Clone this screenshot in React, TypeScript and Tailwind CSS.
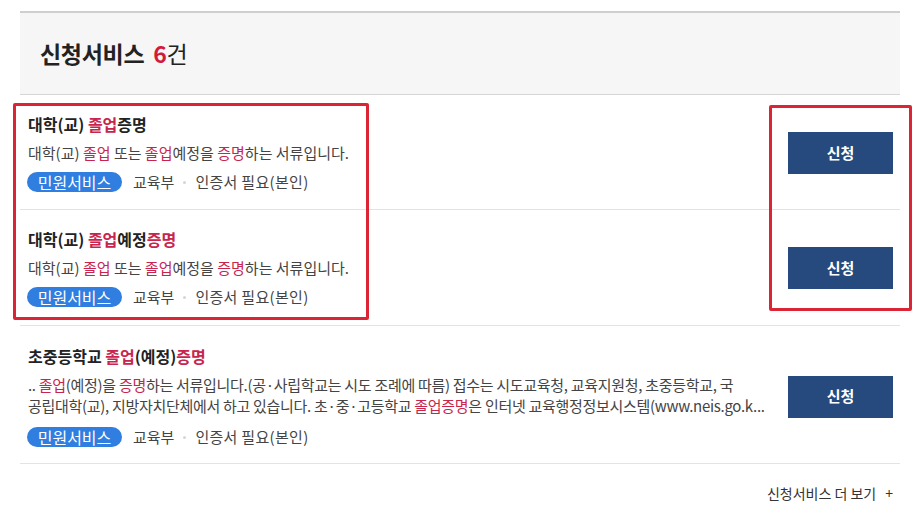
import type { ReactNode } from 'react';

const R = ({ children }: { children: ReactNode }) => (
  <span className="text-[#c8254e]">{children}</span>
);

function Tags() {
  return (
    <div className="flex items-center h-[22px] text-[15px] text-[#444]">
      <span className="h-[20px] w-[95px] rounded-full bg-[#2f7ee0] text-white text-[16px] leading-[20px] flex items-center justify-center -ml-[1px]">
        민원서비스
      </span>
      <span className="ml-[11px]">교육부</span>
      <span className="mx-[9px] w-[3px] h-[3px] rounded-full bg-[#d6d6d6]" />
      <span className="tracking-[0.3px]">인증서 필요(본인)</span>
    </div>
  );
}

function ApplyButton() {
  return (
    <button className="w-[105px] h-[42px] bg-[#264a7e] text-white text-[15px] font-bold shrink-0">
      신청
    </button>
  );
}

type Row = {
  title: ReactNode;
  desc: ReactNode[];
  pt: string;
  pb: string;
  tagGap: string;
};

const rows: Row[] = [
  {
    title: (
      <>
        대학(교) <R>졸업</R>증명
      </>
    ),
    desc: [
      <>
        대학(교) <R>졸업</R> 또는 <R>졸업</R>예정을 <R>증명</R>하는 서류입니다.
      </>,
    ],
    pt: 'pt-[18px]',
    pb: 'pb-[16px]',
    tagGap: 'mt-[7px]',
  },
  {
    title: (
      <>
        대학(교) <R>졸업</R>예정<R>증명</R>
      </>
    ),
    desc: [
      <>
        대학(교) <R>졸업</R> 또는 <R>졸업</R>예정을 <R>증명</R>하는 서류입니다.
      </>,
    ],
    pt: 'pt-[18px]',
    pb: 'pb-[17px]',
    tagGap: 'mt-[7px]',
  },
  {
    title: (
      <>
        초중등학교 <R>졸업</R>(예정)<R>증명</R>
      </>
    ),
    desc: [
      <>
        .. <R>졸업</R>(예정)을 <R>증명</R>하는 서류입니다.(공·사립학교는 시도 조례에 따름) 접수는 시도교육청, 교육지원청, 초중등학교, 국
      </>,
      <>
        공립대학(교), 지방자치단체에서 하고 있습니다. 초·중·고등학교 <R>졸업증명</R>은 인터넷 교육행정정보시스템(www.neis.go.k...
      </>,
    ],
    pt: 'pt-[19px]',
    pb: 'pb-[15px]',
    tagGap: 'mt-[10px]',
  },
];

export default function App() {
  return (
    <div
      className="relative w-[916px] h-[518px] bg-white text-[#222] overflow-hidden"
      style={{ fontFamily: '"Noto Sans CJK KR", "Noto Sans", sans-serif' }}
    >
      <div className="ml-[20px] w-[880px] pt-[11px]">
        {/* Header */}
        <div className="h-[84px] border-t-2 border-[#cfcfcf] border-b border-b-[#d6d6d6] bg-[#f6f6f6] flex items-center pl-[20px]">
          <h2 className="text-[23px] font-bold text-[#222] tracking-[-0.3px]">
            신청서비스 <span className="text-[#d3193c] ml-[4px]">6</span>
            <span className="font-normal">건</span>
          </h2>
        </div>

        {/* List */}
        {rows.map((row, i) => (
          <div
            key={i}
            className={`flex items-center justify-between border-b border-[#e3e3e3] pl-[8px] pr-[7px] ${row.pt} ${row.pb}`}
          >
            <div>
              <h3 className="text-[16px] leading-[22px] font-bold text-[#222]">
                {row.title}
              </h3>
              <div
                className={`mt-[7px] text-[15px] text-[#444] whitespace-nowrap ${
                  row.desc.length > 1 ? 'leading-[21px] tracking-[-0.3px]' : 'leading-[22px]'
                }`}
              >
                {row.desc.map((line, j) => (
                  <div key={j}>{line}</div>
                ))}
              </div>
              <div className={row.tagGap}>
                <Tags />
              </div>
            </div>
            <ApplyButton />
          </div>
        ))}

        {/* More link */}
        <div className="mt-[19px] flex justify-end pr-[7px]">
          <a className="text-[14px] leading-[20px] text-[#333] flex items-center">
            신청서비스 더 보기
            <span className="ml-[9px] text-[14px]">+</span>
          </a>
        </div>
      </div>

      {/* highlight boxes */}
      <div className="absolute left-[13px] top-[103px] w-[356px] h-[217px] border-[3px] border-[#dc2534] rounded-[2px] pointer-events-none" />
      <div className="absolute left-[769px] top-[105px] w-[143px] h-[206px] border-[3px] border-[#dc2534] rounded-[2px] pointer-events-none" />
    </div>
  );
}
